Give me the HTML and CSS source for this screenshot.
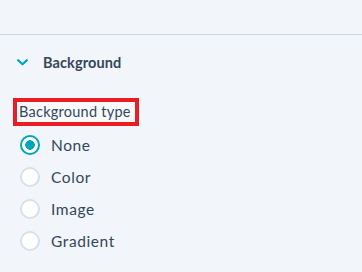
FILE: index.html
```html
<!DOCTYPE html>
<html lang="en">
<head>
    <meta charset="UTF-8">
    <meta name="viewport" content="width=device-width, initial-scale=1.0">
    <title>Background settings</title>
    <link rel="stylesheet" href="styles.css">
</head>
<body>
    <div class="top"></div>
    <section class="panel">
        <div class="panel-header">
            <svg class="chevron" width="11" height="7" viewBox="0 0 11 7">
                <path d="M1.2 1.2 L5.5 5.3 L9.8 1.2" fill="none" stroke="#00a4bd" stroke-width="2.2" stroke-linecap="round" stroke-linejoin="round"/>
            </svg>
            <span class="panel-title">Background</span>
        </div>
        <div class="field">
            <span class="field-label">Background type</span>
        </div>
        <ul class="radios">
            <li class="radio checked"><span class="dot"></span><span class="radio-label">None</span></li>
            <li class="radio"><span class="dot"></span><span class="radio-label">Color</span></li>
            <li class="radio"><span class="dot"></span><span class="radio-label">Image</span></li>
            <li class="radio"><span class="dot"></span><span class="radio-label">Gradient</span></li>
        </ul>
    </section>
</body>
</html>
```

FILE: styles.css
```css
body {
    margin: 0;
    padding: 0;
    background-color: #f2f5f9;
    color: #33475b;
    font-family: Lato, "Open Sans", sans-serif;
}
.top {
    height: 34px;
    border-bottom: 1px solid #cbd6e2;
}
.panel {
    padding-left: 13px;
}
.panel-header {
    display: flex;
    align-items: center;
    height: 24px;
    margin-top: 15px;
}
.chevron {
    display: block;
    margin-left: 4px;
}
.panel-title {
    margin-left: 15px;
    font-size: 14.5px;
    font-weight: bold;
    letter-spacing: 0.1px;
    color: #33475b;
}
.field {
    margin-top: 24px;
}
.field-label {
    display: inline-block;
    border: 4px solid #ec1c24;
    padding: 1px 4px 1px 2px;
    line-height: 18px;
    font-size: 14.5px;
    letter-spacing: 0.25px;
    background: #f7f9fb;
}
.radios {
    list-style: none;
    margin: 3px 0 0 0;
    padding: 0;
}
.radio {
    display: flex;
    align-items: center;
    height: 32px;
}
.dot {
    box-sizing: border-box;
    width: 20px;
    height: 20px;
    margin-left: 7px;
    border: 2px solid #d6e0ea;
    border-radius: 50%;
    background: #fff;
}
.checked .dot {
    border-color: #00a4bd;
    background: radial-gradient(circle, #00a4bd 0, #00a4bd 4.5px, #fff 5px);
}
.radio-label {
    margin-left: 11px;
    font-size: 15.5px;
    letter-spacing: 0.6px;
}
```
